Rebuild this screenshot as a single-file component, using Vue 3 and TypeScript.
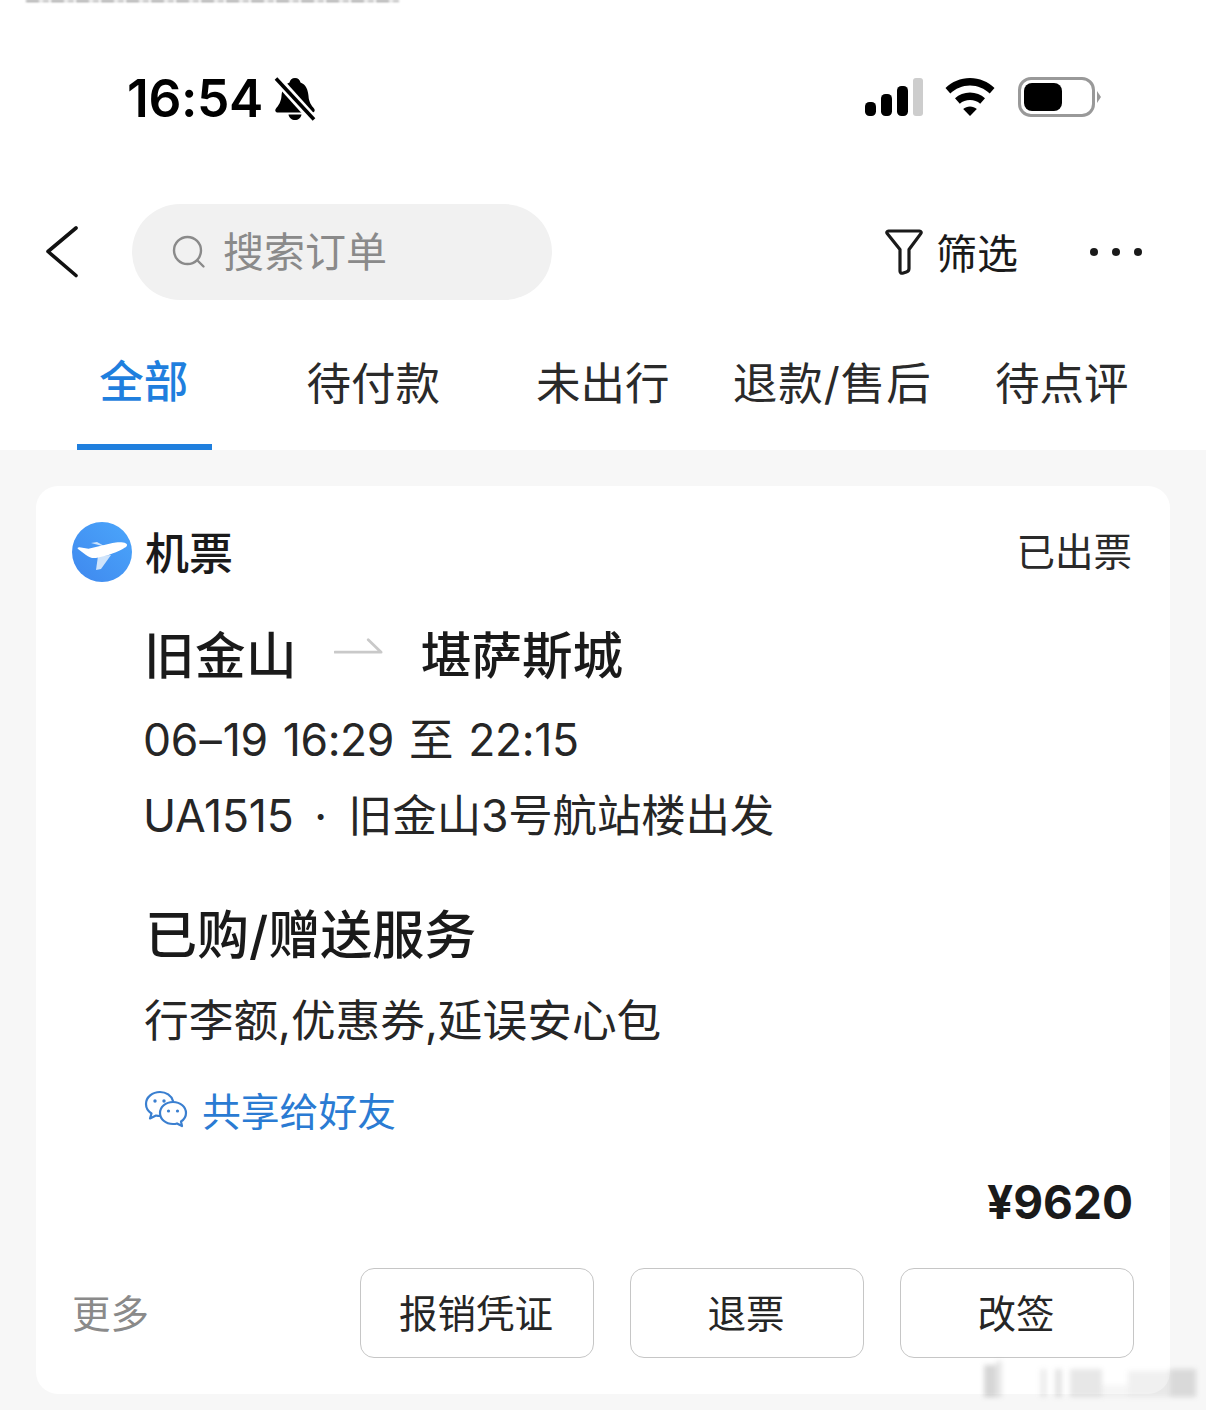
<script setup lang="ts">
import { ref } from 'vue'

const tabs = ['全部', '待付款', '未出行', '退款/售后', '待点评']
const active = ref(0)
const actions = ['报销凭证', '退票', '改签']
const markBars = [
  { w: 12, h: 32, o: 0.24 }, { w: 6, h: 36, o: 0.14 }, { w: 38, h: 4, o: 0 },
  { w: 7, h: 28, o: 0.1 }, { w: 8, h: 4, o: 0 }, { w: 7, h: 28, o: 0.16 },
  { w: 8, h: 4, o: 0 }, { w: 32, h: 28, o: 0.14 }, { w: 26, h: 12, o: 0.05 },
  { w: 42, h: 26, o: 0.09 }, { w: 26, h: 28, o: 0.18 },
]
</script>

<template>
  <div class="page">
    <div class="topcut" aria-hidden="true"></div>

    <header class="statusbar">
      <div class="clock">
        <span class="time">16:54</span>
        <svg class="bell" viewBox="0 0 42 44" width="42" height="44">
          <path d="M21 1c3 0 5 2 5.500 4.500C32 7.500 34 13 34.500 19c.3 6 3 9.500 5.500 12.500 1.500 2 .5 4-2 4H4c-2.500 0-3.500-2-2-4 2.500-3 5-6.500 5.500-12.500C8 13 10 7.500 15.500 5.500 16 3 18 1 21 1z" fill="#000" />
          <path d="M14.500 37.500h13c-.5 3.500-3.300 5.500-6.500 5.500s-6-2-6.500-5.500z" fill="#000" />
          <path d="M3 2l36 40" stroke="#fff" stroke-width="9" />
          <path d="M2 1.500l38 41" stroke="#000" stroke-width="3.600" />
        </svg>
      </div>
      <div class="indicators">
        <svg viewBox="0 0 60 38" width="60" height="38">
          <rect x="1" y="24" width="11" height="14" rx="4.500" fill="#000" />
          <rect x="17" y="16" width="11" height="22" rx="4.500" fill="#000" />
          <rect x="33" y="8" width="11" height="30" rx="4.500" fill="#000" />
          <rect x="49" y="0" width="10" height="38" rx="3" fill="#cdcdcd" />
        </svg>
        <svg class="wifi" viewBox="0 0 50 38" width="50" height="38">
          <path d="M25 0c9.500 0 18 3.800 24.500 10l-4.800 5.500C39.500 10.500 32.600 7.500 25 7.500S10.500 10.500 5.300 15.500L.5 10C7 3.800 15.500 0 25 0z" fill="#000" />
          <path d="M25 14.500c5.800 0 11 2.200 15 5.800l-4.800 5.400C32.400 23.200 28.900 22 25 22s-7.400 1.200-10.200 3.700L10 20.300c4-3.600 9.200-5.800 15-5.800z" fill="#000" />
          <path d="M25 28.500c2.600 0 5 1 6.800 2.600L25 38l-6.800-6.900c1.800-1.600 4.200-2.600 6.800-2.600z" fill="#000" />
        </svg>
        <div class="battery">
          <div class="battery-shell"><div class="battery-level"></div></div>
          <div class="battery-tip"></div>
        </div>
      </div>
    </header>

    <nav class="navbar">
      <svg class="back" viewBox="0 0 34 52" width="34" height="52">
        <path d="M31 2L3 25.500 31 49.500" fill="none" stroke="#111" stroke-width="3.600" stroke-linecap="round" stroke-linejoin="round" />
      </svg>
      <div class="search">
        <svg viewBox="0 0 34 34" width="34" height="34">
          <circle cx="15.500" cy="15.500" r="13.500" fill="none" stroke="#8a8a8a" stroke-width="2.400" />
          <path d="M25.500 25.500l6 6" stroke="#8a8a8a" stroke-width="2.400" stroke-linecap="round" />
        </svg>
        <span>搜索订单</span>
      </div>
      <div class="filter">
        <svg viewBox="0 0 38 46" width="38" height="46">
          <path d="M3.500 2h31c1.500 0 2.200 1.500 1.300 2.600L24 20.500v19c0 1.800-1 3-2.600 3.500l-3.900 1.200c-1.200.3-2.500-.6-2.500-1.900V20.500L2.200 4.600C1.300 3.500 2 2 3.500 2z" fill="none" stroke="#1a1a1a" stroke-width="3.200" stroke-linejoin="round" />
        </svg>
        <span>筛选</span>
      </div>
      <div class="dots"><i></i><i></i><i></i></div>
    </nav>

    <div class="tabs">
      <div
        v-for="(tab, i) in tabs"
        :key="tab"
        class="tab"
        :class="{ active: i === active }"
      >
        <span>{{ tab }}</span>
      </div>
    </div>

    <main class="content">
      <section class="card">
        <div class="card-head">
          <div class="product">
            <svg viewBox="0 0 60 60" width="60" height="60">
              <defs>
                <linearGradient id="planeBg" x1="0" y1="1" x2="1" y2="0">
                  <stop offset="0" stop-color="#3f88ee" />
                  <stop offset="1" stop-color="#4ba6fb" />
                </linearGradient>
              </defs>
              <circle cx="30" cy="30" r="30" fill="url(#planeBg)" />
              <path d="M19 21l6-1 9 5z" fill="#cfe4fb" />
              <path d="M26 34l13-1-10 14-5 1z" fill="#cfe4fb" />
              <path d="M6 27c-1-1 0-2 1.500-1.800l9 1.600 24-5.800c4-.8 10-1.300 13.500.4 2 1 1 3-1 4.200C46 30 36 34 24 36c-4 .5-7-.8-10-3z" fill="#fff" />
            </svg>
            <span>机票</span>
          </div>
          <span class="state">已出票</span>
        </div>

        <div class="detail">
          <div class="route">
            <span>旧金山</span>
            <svg viewBox="0 0 54 26" width="50" height="24">
              <path d="M1 17.500h50L37 4" fill="none" stroke="#c9c9c9" stroke-width="3" stroke-linecap="round" stroke-linejoin="round" />
            </svg>
            <span>堪萨斯城</span>
          </div>
          <div class="times">06<span class="dash">–</span>19 16:29 至 22:15</div>
          <div class="flight">UA1515<span class="sep">·</span>旧金山3号航站楼出发</div>

          <h2 class="services-title">已购/赠送服务</h2>
          <div class="services">行李额,优惠券,延误安心包</div>

          <div class="share">
            <svg viewBox="0 0 44 38" width="44" height="38">
              <path d="M29 11C27.500 5.500 22 2 16 2 8.500 2 2 7 2 14c0 4 2.200 7.300 5.500 9.500L6 28.500l6-3c1.200.3 2.500.5 4 .5" fill="none" stroke="#3a7fd0" stroke-width="2.200" stroke-linecap="round" stroke-linejoin="round" />
              <path d="M29 12c-7.500 0-13 5-13 11s5.500 11 13 11c1.500 0 3-.2 4-.6l5 2.600-1-4.500c3.200-2 5-5 5-8.500 0-6-5.500-11-13-11z" fill="none" stroke="#3a7fd0" stroke-width="2.200" stroke-linejoin="round" />
              <circle cx="11" cy="11" r="1.700" fill="#3a7fd0" /><circle cx="20" cy="11" r="1.700" fill="#3a7fd0" />
              <circle cx="24.500" cy="21" r="1.600" fill="#3a7fd0" /><circle cx="33.500" cy="21" r="1.600" fill="#3a7fd0" />
            </svg>
            <span>共享给好友</span>
          </div>
        </div>

        <div class="price">¥9620</div>

        <div class="card-foot">
          <span class="more">更多</span>
          <div class="actions">
            <button v-for="a in actions" :key="a" type="button">{{ a }}</button>
          </div>
        </div>
      </section>
    </main>

    <div class="watermark" aria-hidden="true">
      <i
        v-for="(b, i) in markBars"
        :key="i"
        :style="{ width: b.w + 'px', height: b.h + 'px', opacity: b.o }"
      ></i>
    </div>
  </div>
</template>

<style>
html, body {
  margin: 0;
  background: #fff;
}
</style>

<style scoped>
.page {
  position: relative;
  width: 1206px;
  height: 1410px;
  overflow: hidden;
  background: #f7f7f7;
  color: #1a1a1a;
  font-family: "Inter", "Noto Sans CJK SC", sans-serif;
}

/* cut-off remains of a text line above the screenshot */
.topcut {
  position: absolute;
  top: 0;
  left: 26px;
  width: 374px;
  height: 2px;
  background: repeating-linear-gradient(90deg, #9a9a9a 0 13px, #e2e2e2 13px 17px, #b4b4b4 17px 23px, #fff 23px 25px);
  filter: blur(0.8px);
}

.statusbar {
  box-sizing: border-box;
  height: 204px;
  padding: 71px 105px 0 127px;
  display: flex;
  justify-content: space-between;
  align-items: flex-start;
  background: #fff;
}
.clock {
  display: flex;
  align-items: center;
  gap: 11px;
}
.time {
  font-family: "Inter", sans-serif;
  font-size: 51.500px;
  font-weight: 600;
  line-height: 54px;
  color: #000;
  letter-spacing: -0.4px;
}
.bell {
  margin-top: 2px;
}
.indicators {
  display: flex;
  align-items: center;
  gap: 22px;
  height: 52px;
}
.wifi {
  margin: 0 1px 0 -1px;
}
.battery {
  display: flex;
  align-items: center;
}
.battery-shell {
  box-sizing: border-box;
  width: 77px;
  height: 40px;
  padding: 3px;
  border: 3px solid #999;
  border-radius: 13px;
  background: #fff;
}
.battery-level {
  width: 38px;
  height: 100%;
  border-radius: 8px;
  background: #000;
}
.battery-tip {
  width: 0;
  height: 0;
  margin-left: 2px;
  border-top: 6px solid transparent;
  border-bottom: 6px solid transparent;
  border-left: 4px solid #999;
}

.navbar {
  box-sizing: border-box;
  height: 96px;
  display: flex;
  align-items: center;
  padding: 0 64px 0 45px;
  background: #fff;
}
.search {
  box-sizing: border-box;
  width: 420px;
  height: 96px;
  margin-left: 53px;
  padding-left: 40px;
  display: flex;
  align-items: center;
  gap: 17px;
  border-radius: 48px;
  background: #f1f1f1;
  color: #8a8a8a;
  font-size: 41px;
}
.search span {
  padding-bottom: 6px;
}
.filter {
  display: flex;
  align-items: center;
  gap: 13px;
  margin-left: 333px;
  font-size: 41px;
  color: #1a1a1a;
}
.filter span {
  padding-bottom: 2px;
}
.dots {
  display: flex;
  gap: 14px;
  margin-left: auto;
}
.dots i {
  width: 8px;
  height: 8px;
  border-radius: 50%;
  background: #1a1a1a;
}

.tabs {
  box-sizing: border-box;
  height: 150px;
  padding: 0 0 0 30px;
  display: flex;
  background: #fff;
}
.tab {
  position: relative;
  flex: none;
  width: 229.500px;
  display: flex;
  justify-content: center;
  align-items: flex-start;
  padding-top: 52px;
  padding-right: 2px;
  box-sizing: border-box;
  font-size: 44.500px;
  line-height: 64px;
  color: #2a2a2a;
  white-space: nowrap;
}
.tab:nth-child(4) {
  letter-spacing: 1px;
}
.tab.active {
  color: #1f7fde;
  font-weight: 500;
  padding-top: 50px;
}
.tab.active::after {
  content: "";
  position: absolute;
  left: 47px;
  right: 48px;
  bottom: 0;
  height: 6px;
  background: #1f7fde;
}

.content {
  padding: 36px 36px 0;
}
.card {
  box-sizing: border-box;
  height: 908px;
  padding: 36px 36px 0;
  border-radius: 22px;
  background: #fff;
}
.card-head {
  display: flex;
  justify-content: space-between;
  align-items: center;
  height: 60px;
}
.product {
  display: flex;
  align-items: center;
  gap: 13px;
  font-size: 44px;
  font-weight: 500;
  color: #1a1a1a;
}
.product span {
  padding-bottom: 2px;
}
.state {
  margin-right: 2px;
  padding-bottom: 6px;
  font-size: 38.500px;
  color: #2a2a2a;
}
.detail {
  padding-left: 73px;
}
.route {
  display: flex;
  align-items: center;
  gap: 37px;
  height: 80px;
  margin-top: 30px;
  font-size: 50.500px;
  font-weight: 500;
  color: #1a1a1a;
}
.route svg {
  margin-top: -8px;
}
.route span:first-child {
  margin-left: -1px;
  letter-spacing: 0.5px;
}
.times {
  margin-top: 20px;
  margin-left: -2px;
  height: 56px;
  line-height: 56px;
  font-size: 44.500px;
  letter-spacing: -0.4px;
  word-spacing: 3px;
  color: #262626;
}
.dash {
  padding: 0 1.500px;
}
.flight {
  margin-top: 20px;
  margin-left: -2px;
  height: 56px;
  line-height: 56px;
  font-size: 44.500px;
  letter-spacing: -0.2px;
  color: #262626;
  white-space: nowrap;
}
.sep {
  display: inline-block;
  width: 54px;
  text-align: center;
  margin-right: 0.500px;
}
.services-title {
  margin: 60px 0 0;
  height: 64px;
  line-height: 64px;
  font-size: 52px;
  font-weight: 500;
  color: #1a1a1a;
}
.services {
  margin-top: 25px;
  margin-left: -1px;
  height: 56px;
  line-height: 56px;
  font-size: 44.700px;
  color: #262626;
}
.share {
  display: flex;
  align-items: center;
  gap: 14px;
  margin-top: 32px;
  margin-left: -1px;
  height: 56px;
  font-size: 38.800px;
  color: #2a7bd3;
}
.price {
  margin-top: 37px;
  height: 56px;
  line-height: 56px;
  text-align: right;
  font-family: "Inter", sans-serif;
  font-size: 46px;
  font-weight: 700;
  color: #1a1a1a;
  padding-right: 1px;
}
.card-foot {
  display: flex;
  justify-content: space-between;
  align-items: center;
  margin-top: 38px;
}
.more {
  padding-bottom: 4px;
  font-size: 38.500px;
  color: #8a8a8a;
}
.actions {
  display: flex;
  gap: 36px;
}
.actions button {
  box-sizing: border-box;
  width: 234px;
  height: 90px;
  padding: 0 2px 4px 0;
  border: 1.500px solid #c6c6c6;
  border-radius: 14px;
  background: #fff;
  color: #262626;
  font-family: inherit;
  font-size: 38.500px;
}

.watermark {
  position: absolute;
  left: 984px;
  top: 1361px;
  display: flex;
  align-items: flex-end;
  height: 36px;
  filter: blur(2.5px);
}
.watermark i {
  display: block;
  background: #555;
}
</style>
